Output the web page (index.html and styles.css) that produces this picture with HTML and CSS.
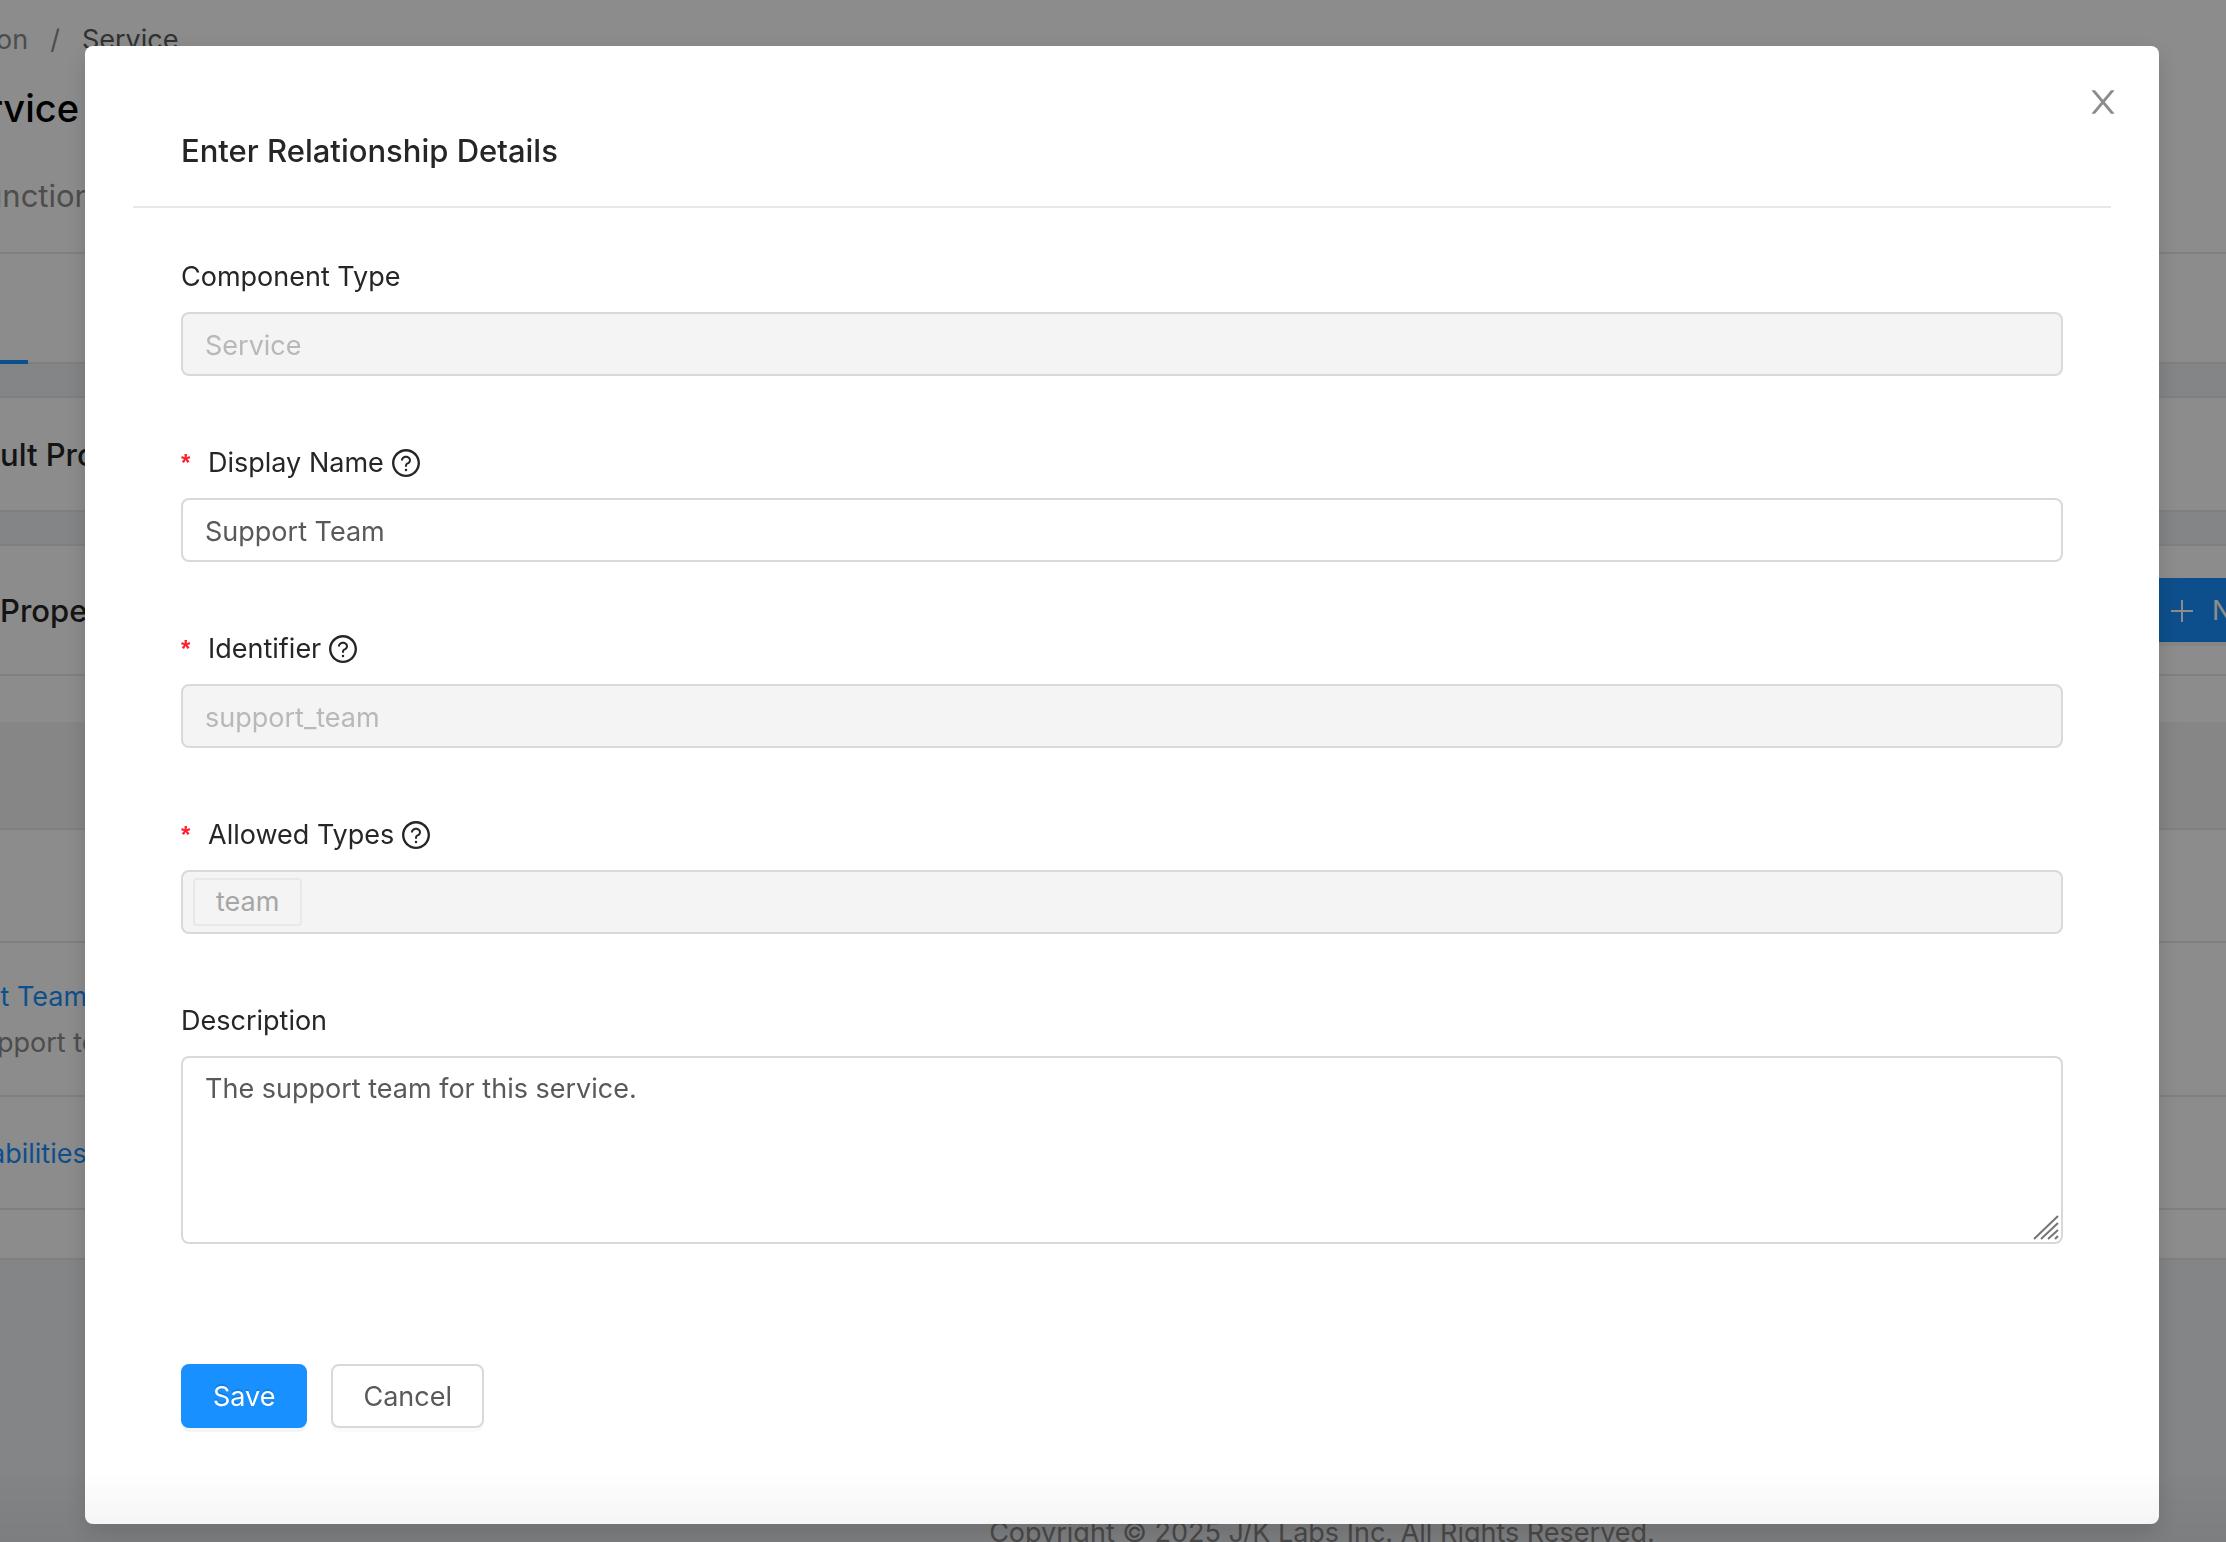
FILE: index.html
```html
<!DOCTYPE html>
<html lang="en">
<head>
<meta charset="utf-8">
<title>Enter Relationship Details</title>
<link rel="stylesheet" href="styles.css">
</head>
<body>
<div class="page">
  <header class="page-header">
    <nav class="breadcrumb"><a href="#">on</a><span>/</span><span class="current">Service</span></nav>
    <h1 class="page-title cut">rvice</h1>
    <p class="page-subtitle cut">unction</p>
  </header>
  <div class="tabs"><div class="tab-active"></div></div>
  <main class="cards">
    <section class="card"><div class="card-head"><h2>ult Pro</h2></div></section>
    <section class="card">
      <div class="card-head tall"><h2>Prope</h2>
        <button class="new-button" type="button"><svg width="24" height="24" viewBox="0 0 24 24" aria-hidden="true"><path d="M12 1v22M1 12h22" stroke="currentColor" stroke-width="2"/></svg>N</button>
      </div>
      <div class="card-body">
        <table class="rows">
          <thead><tr><th></th></tr></thead>
          <tbody>
            <tr><td></td></tr>
            <tr class="double"><td><div class="cut"><a href="#">rt Team</a></div><div class="muted">pport te</div></td></tr>
            <tr><td><div class="cut"><a href="#">abilities</a></div></td></tr>
          </tbody>
        </table>
      </div>
    </section>
  </main>
  <footer class="page-footer">Copyright © 2025 J/K Labs Inc. All Rights Reserved.</footer>
</div>

<div class="overlay">
  <div class="modal" role="dialog" aria-labelledby="dialog-title">
    <button class="close" type="button" aria-label="Close"><svg width="32" height="32" viewBox="64 64 896 896" fill="currentColor"><path d="M563.8 512l262.5-312.9c4.4-5.2.7-13.1-6.1-13.1h-79.8c-4.7 0-9.2 2.1-12.3 5.7L511.6 449.8 295.1 191.7c-3-3.6-7.5-5.7-12.3-5.7H203c-6.8 0-10.5 7.9-6.1 13.1L459.4 512 196.9 824.9A7.95 7.95 0 00203 838h79.8c4.7 0 9.2-2.1 12.3-5.7l216.5-258.1 216.5 258.1c3 3.6 7.5 5.7 12.3 5.7h79.8c6.8 0 10.5-7.9 6.1-13.1L563.8 512z"/></svg></button>
    <h2 class="modal-title" id="dialog-title">Enter Relationship Details</h2>
    <form class="form">
      <div class="field">
        <label for="type">Component Type</label>
        <input id="type" class="control" type="text" value="Service" disabled>
      </div>
      <div class="field">
        <label for="name"><span class="required">*</span>Display Name<svg class="help" viewBox="64 64 896 896"><use href="#question"/></svg></label>
        <input id="name" class="control" type="text" value="Support Team">
      </div>
      <div class="field">
        <label for="identifier"><span class="required">*</span>Identifier<svg class="help" viewBox="64 64 896 896"><use href="#question"/></svg></label>
        <input id="identifier" class="control" type="text" value="support_team" disabled>
      </div>
      <div class="field">
        <label for="allowed"><span class="required">*</span>Allowed Types<svg class="help" viewBox="64 64 896 896"><use href="#question"/></svg></label>
        <div class="control tags"><span class="tag">team</span><input id="allowed" class="tag-input" type="text" disabled></div>
      </div>
      <div class="field">
        <label for="description">Description</label>
        <div class="area">
          <textarea id="description" class="control">The support team for this service.</textarea>
          <svg class="grip" width="26" height="26" viewBox="0 0 26 26" aria-hidden="true"><path d="M1 24L25 1M8 24L25 8M15 24L25 15M22 24L25 21" stroke="#757575" stroke-width="2"/></svg>
        </div>
      </div>
      <div class="actions">
        <button class="button primary" type="button">Save</button>
        <button class="button" type="button">Cancel</button>
      </div>
    </form>
  </div>
</div>
<div class="fade"></div>
<svg width="0" height="0" class="symbols" aria-hidden="true"><defs><g id="question" fill="currentColor"><path d="M512 64C264.6 64 64 264.6 64 512s200.6 448 448 448 448-200.6 448-448S759.4 64 512 64zm0 820c-205.4 0-372-166.6-372-372s166.6-372 372-372 372 166.6 372 372-166.6 372-372 372z"/><path d="M623.6 316.7C593.6 290.4 554 276 512 276s-81.6 14.5-111.6 40.7C369.2 344 352 380.7 352 420v7.6c0 4.4 3.6 8 8 8h48c4.4 0 8-3.6 8-8V420c0-44.1 43.1-80 96-80s96 35.9 96 80c0 31.1-22 59.6-56.1 72.7-21.2 8.1-39.2 22.3-52.1 40.9-13.1 19-19.9 41.8-19.9 64.9V620c0 4.4 3.6 8 8 8h48c4.4 0 8-3.6 8-8v-22.7a48.3 48.3 0 0130.9-44.8c59-22.7 97.1-74.7 97.1-132.5.1-39.3-17.1-76-48.3-103.3zM472 732a40 40 0 1080 0 40 40 0 10-80 0z"/></g></defs></svg>
</body>
</html>
```
FILE: styles.css
```css
* { box-sizing: border-box; }
html, body { height: 100%; }
body {
  margin: 0;
  overflow: hidden;
  background: #f0f2f5;
  color: #262626;
  font: 27px/44px Inter, "Liberation Sans", sans-serif;
}
h1, h2, p { margin: 0; }
a { color: #1890ff; text-decoration: none; }
button, input, textarea { font: inherit; }

/* Page behind the dialog */
.page { height: 100%; overflow: hidden; white-space: nowrap; }
.cut { margin-left: -10px; }
.page-header {
  height: 254px;
  padding-top: 18px;
  background: #fff;
  border-bottom: 2px solid #e8e8e8;
}
.breadcrumb { display: flex; gap: 22px; margin-left: -4px; color: #8c8c8c; }
.breadcrumb a { color: inherit; }
.breadcrumb .current { color: #595959; }
.page-title { padding-top: 18px; font-size: 38px; line-height: 56px; font-weight: 500; color: #000; }
.page-title.cut { margin-left: -12px; }
.page-subtitle { padding-top: 38px; font-size: 31px; color: #8c8c8c; }
.page-subtitle.cut { margin-left: -16px; }
.tabs {
  display: flex;
  align-items: flex-end;
  height: 110px;
  background: linear-gradient(#e8e8e8, #e8e8e8) bottom / 100% 2px no-repeat #fff;
}
.tab-active { width: 28px; height: 4px; background: #1890ff; }
.cards { display: grid; gap: 32px; padding: 32px 0; }
.card { min-width: 0; background: #fff; border: solid #e8e8e8; border-width: 2px 0; }
.card-head { display: flex; align-items: center; justify-content: space-between; height: 112px; }
.card-head.tall { height: 130px; border-bottom: 2px solid #e8e8e8; }
.card-head h2 { padding-top: 2px; font-size: 31px; font-weight: 500; }
.new-button {
  display: flex;
  align-items: center;
  gap: 18px;
  width: 100px;
  height: 64px;
  padding: 2px 0 0 44px;
  border: 0;
  background: #1890ff;
  color: #fff;
  box-shadow: 0 4px 0 rgba(0, 0, 0, .04);
}
.new-button svg { flex: none; }
.card-body { padding: 46px 0 48px; }
.rows { width: 100%; border-collapse: separate; border-spacing: 0; }
.rows th { height: 108px; padding: 0; background: #f4f4f4; border-bottom: 2px solid #e8e8e8; }
.rows td { height: 113px; padding: 2px 0 0; border-bottom: 2px solid #e8e8e8; line-height: 46px; }
.rows .double td { height: 154px; }
.muted { margin-left: -3px; color: #8c8c8c; }
.page-footer { padding: 219px 0 0 418px; text-align: center; color: #8c8c8c; }

/* Dialog */
.overlay {
  position: fixed;
  inset: 0;
  padding: 46px 67px 18px 85px;
  background: rgba(0, 0, 0, .45);
}
.modal {
  position: relative;
  padding: 0 48px 96px;
  background: #fff;
  border-radius: 8px;
  box-shadow: 0 8px 24px rgba(0, 0, 0, .15);
}
.close {
  position: absolute;
  top: 40px;
  right: 40px;
  display: flex;
  padding: 0;
  border: 0;
  background: none;
  color: #8c8c8c;
}
.modal-title {
  padding: 83px 48px 33px;
  border-bottom: 2px solid #e8e8e8;
  font-size: 31px;
  font-weight: 500;
}
.form { display: grid; gap: 64px; padding: 46px 48px 0; }
.field { display: grid; gap: 12px; }
.field label { display: flex; align-items: center; line-height: 46px; }
.required { width: 27px; color: #ff1f2f; font: bold 24px/44px "Liberation Sans", sans-serif; }
.help { width: 28px; height: 28px; margin-left: 8px; }
.control {
  display: block;
  width: 100%;
  height: 64px;
  padding: 2px 22px 0;
  border: 2px solid #d9d9d9;
  border-radius: 8px;
  background: #fff;
  color: #595959;
}
.control:disabled, .tags { background: #f4f4f4; color: #b8b8b8; }
.tags { display: flex; align-items: center; padding: 0 10px; }
.tag {
  padding: 0 21px;
  border: 2px solid #e8e8e8;
  border-radius: 4px;
  color: #a6a6a6;
}
.tag-input { flex: 1; min-width: 0; border: 0; background: none; }
.area { position: relative; }
textarea.control { height: 188px; padding: 8px 22px; line-height: 46px; resize: none; }
.grip { position: absolute; right: 4px; bottom: 3px; }
.actions { display: flex; gap: 24px; padding-top: 56px; }
.button {
  height: 64px;
  padding: 2px 30px 0;
  border: 2px solid #d9d9d9;
  border-radius: 8px;
  background: #fff;
  color: #595959;
  box-shadow: 0 4px 0 rgba(0, 0, 0, .02);
}
.button.primary {
  background: #1890ff;
  border-color: #1890ff;
  color: #fff;
  text-shadow: 0 -2px 0 rgba(0, 0, 0, .12);
  box-shadow: 0 4px 0 rgba(0, 0, 0, .04);
}
.fade {
  position: fixed;
  inset: auto 0 0;
  height: 72px;
  background: linear-gradient(rgba(0, 0, 0, 0), rgba(0, 0, 0, .05));
  pointer-events: none;
}
.symbols { position: absolute; }
```
